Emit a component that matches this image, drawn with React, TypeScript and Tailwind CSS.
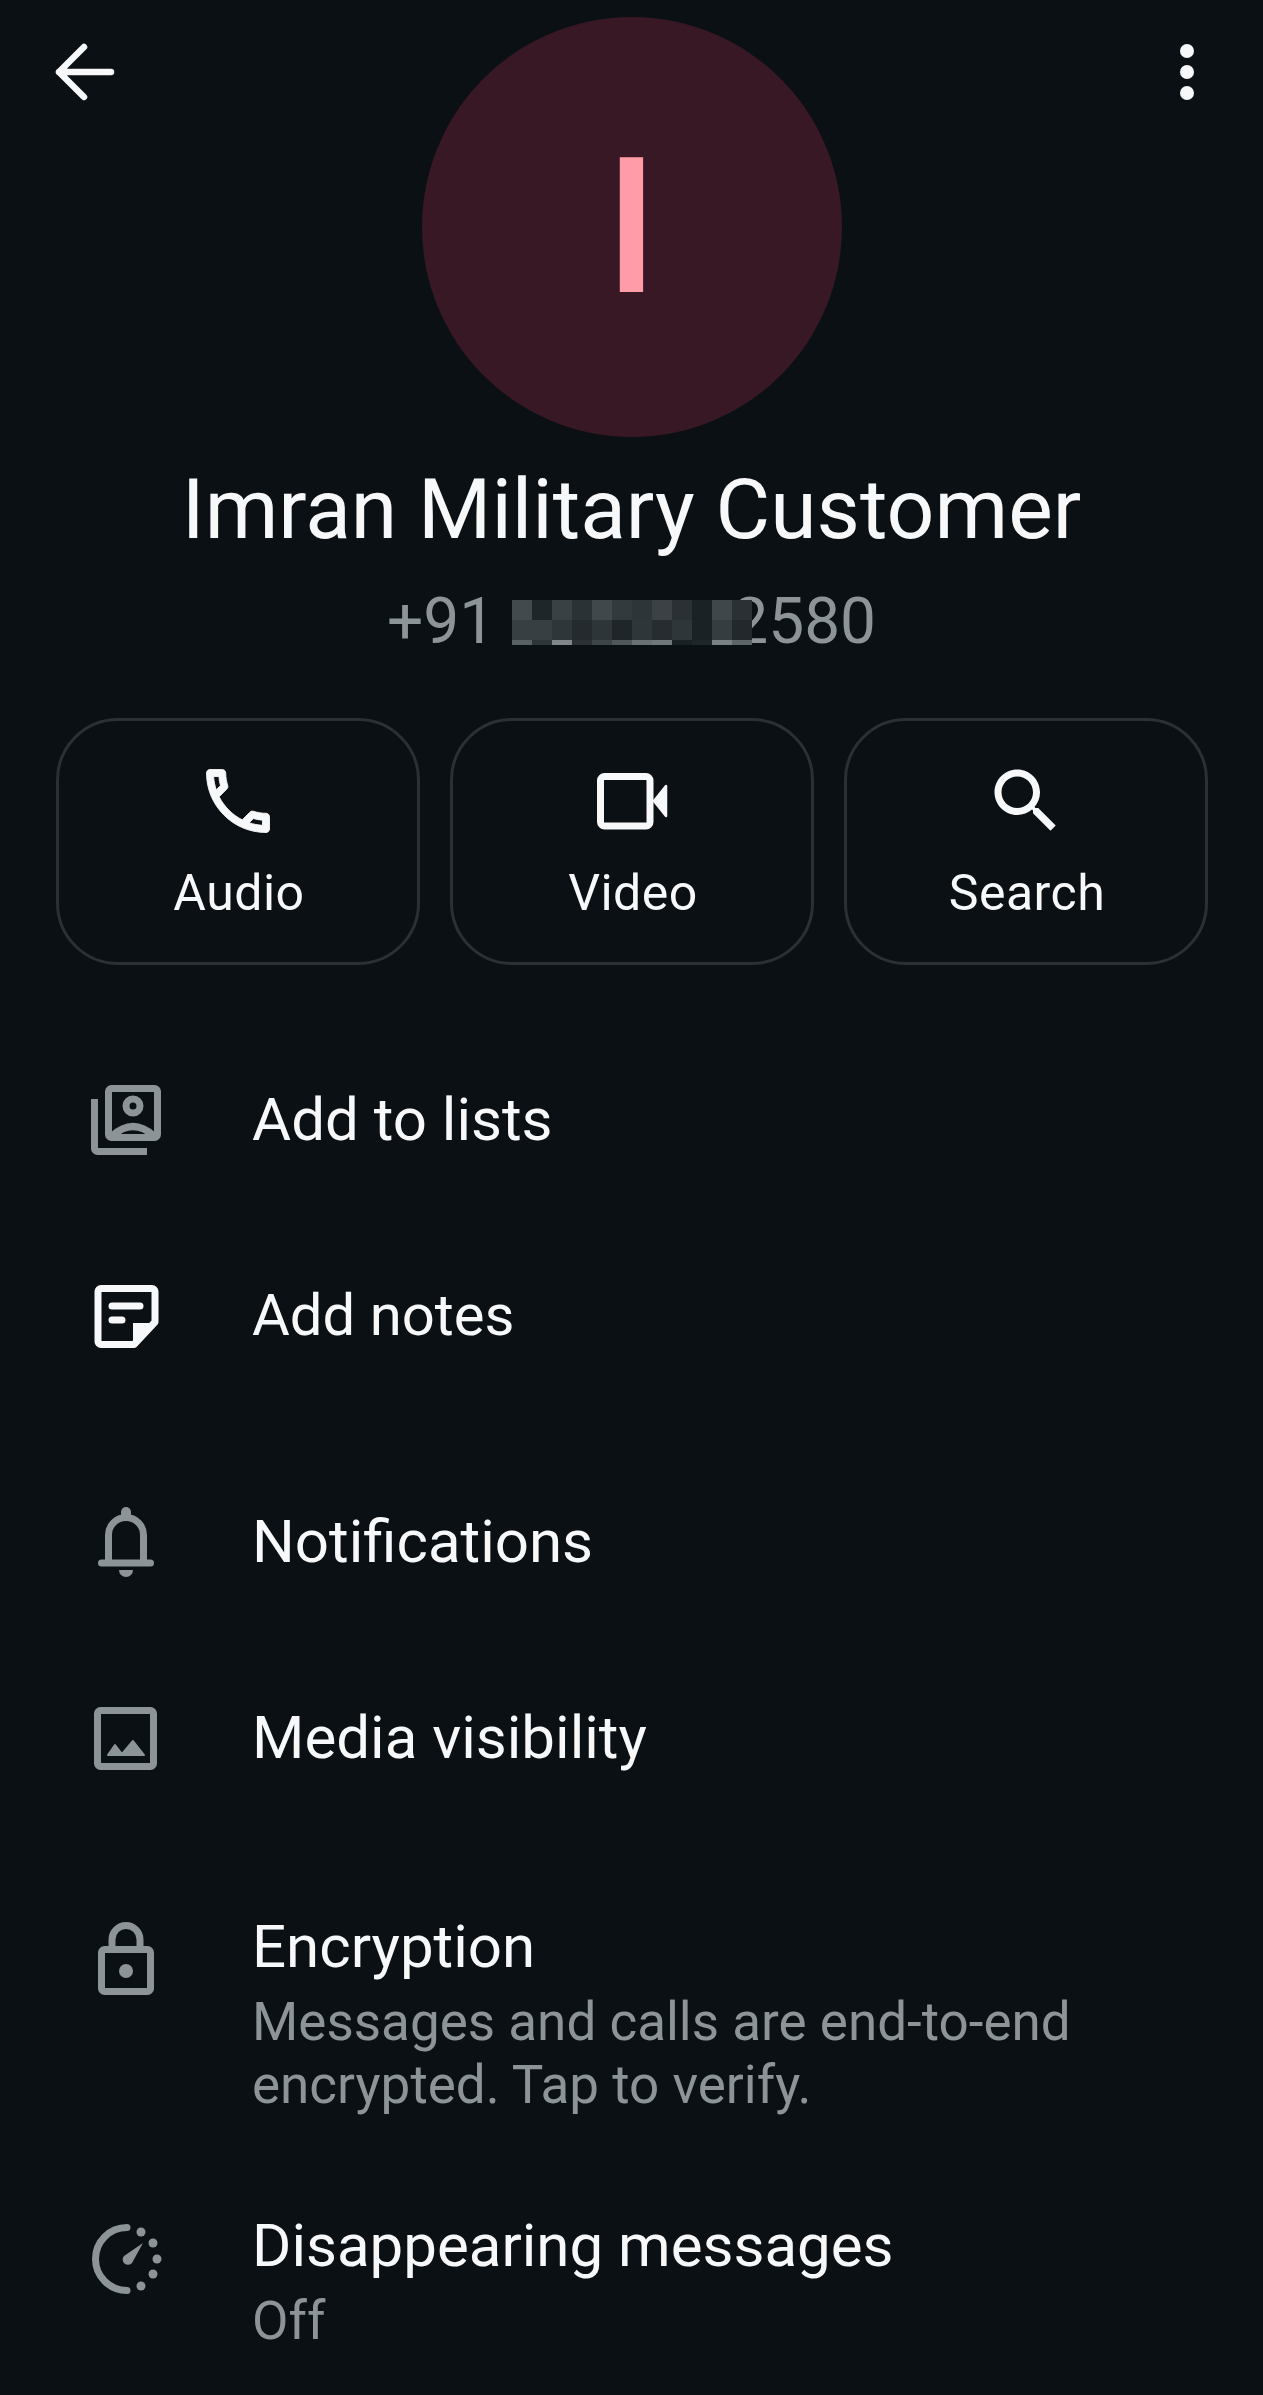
import type { ReactNode } from 'react'

const MOSAIC = [
  'bg-[#434a4d]', 'bg-[#1f2629]', 'bg-[#3a4144]', 'bg-[#2a3235]', 'bg-[#40484c]', 'bg-[#333a3d]', 'bg-[#2e3538]', 'bg-[#3c4145]', 'bg-[#2a3033]', 'bg-[#1b2225]', 'bg-[#40474a]', 'bg-[#2a3033]',
  'bg-[#383f42]', 'bg-[#383f42]', 'bg-[#2f3639]', 'bg-[#242a2d]', 'bg-[#2e3538]', 'bg-[#1f2528]', 'bg-[#2f3639]', 'bg-[#272c30]', 'bg-[#2f3639]', 'bg-[#1b2225]', 'bg-[#363d40]', 'bg-[#22282b]',
  'bg-[#5a6164]', 'bg-[#2e3538]', 'bg-[#80878a]', 'bg-[#2a3033]', 'bg-[#3e4548]', 'bg-[#50575a]', 'bg-[#6a7175]', 'bg-[#70777a]', 'bg-[#1a2124]', 'bg-[#1f2629]', 'bg-[#7a8184]', 'bg-[#5e6569]',
]

function PhoneIcon() {
  return (
    <svg viewBox="0 0 24 24" className="h-[84px] w-[84px] fill-current stroke-current stroke-[0.25]">
      <path d="M6.54 5c.06.89.21 1.76.45 2.59l-1.2 1.2c-.41-1.2-.67-2.47-.76-3.79h1.51m9.86 12.02c.85.24 1.72.39 2.6.45v1.49c-1.32-.09-2.59-.35-3.8-.75l1.2-1.19M7.5 3H4c-.55 0-1 .45-1 1 0 9.39 7.61 17 17 17 .55 0 1-.45 1-1v-3.49c0-.55-.45-1-1-1-1.24 0-2.45-.2-3.57-.57-.1-.04-.21-.05-.31-.05-.26 0-.51.1-.71.29l-2.2 2.2c-2.83-1.45-5.15-3.76-6.59-6.59l2.2-2.2c.28-.28.36-.67.25-1.02C8.7 6.45 8.5 5.25 8.5 4c0-.55-.45-1-1-1z" />
    </svg>
  )
}

function VideoIcon() {
  return (
    <svg viewBox="590 759 84 84" className="h-[84px] w-[84px]" fill="none">
      <rect x="600.5" y="776.5" width="49.5" height="49.5" rx="4" stroke="currentColor" strokeWidth="7" />
      <path d="M654 801 L666 786 V816 Z" fill="currentColor" stroke="currentColor" strokeWidth="2.5" strokeLinejoin="round" />
    </svg>
  )
}

function SearchIcon() {
  return (
    <svg viewBox="0 0 24 24" className="h-[84px] w-[84px] fill-current">
      <path d="M15.5 14h-.79l-.28-.27C15.41 12.59 16 11.11 16 9.5 16 5.91 13.09 3 9.5 3S3 5.91 3 9.5 5.91 16 9.5 16c1.61 0 3.09-.59 4.23-1.57l.27.28v.79l5 4.99L20.49 19l-4.99-5zm-6 0C7.01 14 5 11.99 5 9.5S7.01 5 9.5 5 14 7.01 14 9.5 11.99 14 9.5 14z" />
    </svg>
  )
}

function ActionButton({ icon, label }: { icon: ReactNode; label: string }) {
  return (
    <button
      type="button"
      className="flex h-[247px] w-[364px] flex-col items-center rounded-[62px] border-[3px] border-[#2a3034] pt-[38px] text-[#f7f8fa]"
    >
      {icon}
      <span className="mt-[18px] pl-[3px] text-[50px] leading-[64px] tracking-[0.5px]">{label}</span>
    </button>
  )
}

function RowIcon({ top, children }: { top: number; children: ReactNode }) {
  return (
    <svg viewBox={`81 ${top} 90 90`} className="h-[90px] w-[90px] shrink-0" fill="none">
      {children}
    </svg>
  )
}

function Row({ icon, label, className, textClass = 'text-[60px]' }: { icon: ReactNode; label: string; className: string; textClass?: string }) {
  return (
    <div className={`flex items-center pl-[81px] ${className}`}>
      <div className="w-[171px] shrink-0">{icon}</div>
      <span className={`leading-[70px] text-[#f7f8fa] ${textClass}`}>{label}</span>
    </div>
  )
}

const GRAY = '#8c9498'

export default function App() {
  return (
    <div className="relative h-[2395px] w-[1263px] overflow-hidden bg-[#0b1014] font-['Roboto',sans-serif]">
      {/* top bar floats over the avatar row */}
      <svg viewBox="40 30 90 90" className="absolute top-[30px] left-[40px] h-[90px] w-[90px]" fill="none">
        <path d="M84 47 L59 72 L84 97 M59 72 H111" stroke="#f7f8fa" strokeWidth="6.5" strokeLinecap="round" strokeLinejoin="round" />
      </svg>
      <svg viewBox="1150 30 80 90" className="absolute top-[30px] left-[1150px] h-[90px] w-[80px]" fill="#f7f8fa">
        <circle cx="1187" cy="51" r="7" />
        <circle cx="1187" cy="72" r="7" />
        <circle cx="1187" cy="93" r="7" />
      </svg>

      <header className="flex flex-col items-center pt-[17px]">
        <div className="flex h-[420px] w-[420px] items-center justify-center rounded-full bg-[#371824]">
          <span className="text-[190px] leading-none font-medium text-[#ff9ca8]">I</span>
        </div>
        <h1 className="mt-[26px] text-[84px] leading-[94px] font-normal text-[#f7f8fa]">Imran Military Customer</h1>
        <div className="mt-[30px] flex items-center text-[64px] leading-[70px] text-[#8c9498]">
          <span className="mr-[17px]">+91</span>
          <div className="relative z-10 grid grid-cols-[repeat(12,20px)] grid-rows-[20px_20px_5px]">
            {MOSAIC.map((cell, i) => (
              <span key={i} className={cell} />
            ))}
          </div>
          <span className="-ml-[20px]">2580</span>
        </div>
      </header>

      <div className="mt-[61px] flex justify-center gap-[30px]">
        <ActionButton icon={<PhoneIcon />} label="Audio" />
        <ActionButton icon={<VideoIcon />} label="Video" />
        <ActionButton icon={<SearchIcon />} label="Search" />
      </div>

      <div className="mt-[57px]">
        <Row
          className="h-[196px]"
          label="Add to lists"
          icon={
            <RowIcon top={1074}>
              <g stroke={GRAY} strokeWidth="7">
                <rect x="108.5" y="1087.5" width="49" height="49" rx="3" />
                <circle cx="133" cy="1105" r="7" />
                <path d="M112 1135 Q133 1116 154 1135" />
                <path d="M94.5 1098 V1147.5 a3 3 0 0 0 3 3 H147" />
              </g>
            </RowIcon>
          }
        />
        <Row
          className="h-[196px]"
          label="Add notes"
          textClass="-mt-[3px] text-[58px]"
          icon={
            <RowIcon top={1270}>
              <path d="M101 1287.5 H152 a3 3 0 0 1 3 3 V1321 L134 1343.5 H101 a3 3 0 0 1 -3 -3 V1290.5 a3 3 0 0 1 3 -3 Z" stroke="#f7f8fa" strokeWidth="7" strokeLinejoin="round" />
              <path d="M133 1322 H156 L136 1345 H133 Z" fill="#f7f8fa" />
              <path d="M112 1305 H140 M112 1319 H122" stroke="#f7f8fa" strokeWidth="7" strokeLinecap="round" />
            </RowIcon>
          }
        />
        <Row
          className="mt-[30px] h-[196px]"
          label="Notifications"
          icon={
            <RowIcon top={1495}>
              <path d="M108.5 1561 V1533 a17.5 17.5 0 0 1 35 0 V1561 M101.5 1561 H150.5" stroke={GRAY} strokeWidth="7" strokeLinecap="round" />
              <rect x="121" y="1505" width="10" height="12" rx="5" fill={GRAY} />
              <path d="M119 1568 H133 a7 7 0 0 1 -14 0 Z" fill={GRAY} />
            </RowIcon>
          }
        />
        <Row
          className="h-[196px]"
          label="Media visibility"
          icon={
            <RowIcon top={1690}>
              <rect x="97.5" y="1707.5" width="56" height="56" rx="3" stroke={GRAY} strokeWidth="7" />
              <path d="M108 1752 L115 1742 L122 1751 L133 1738 L144 1752 Z" fill={GRAY} stroke={GRAY} strokeWidth="2" strokeLinejoin="round" />
            </RowIcon>
          }
        />
      </div>

      <div className="mt-[76px] flex pl-[81px]">
        <div className="w-[171px] shrink-0 pt-[1px]">
          <RowIcon top={1913}>
            <rect x="101.5" y="1949.5" width="49" height="42" rx="3" stroke={GRAY} strokeWidth="7" />
            <path d="M112 1946 V1939.5 a14 14 0 0 1 28 0 V1946" stroke={GRAY} strokeWidth="7" />
            <circle cx="126" cy="1971" r="7" fill={GRAY} />
          </RowIcon>
        </div>
        <div className="w-[860px]">
          <div className="text-[60px] leading-[70px] text-[#f7f8fa]">Encryption</div>
          <div className="mt-[9px] text-[53px] leading-[63px] text-[#8c9498]">
            Messages and calls are end-to-end encrypted. Tap to verify.
          </div>
        </div>
      </div>

      <div className="mt-[94px] flex pl-[81px]">
        <div className="w-[171px] shrink-0 pt-[3px]">
          <RowIcon top={2213}>
            <path d="M127 2226.5 A31.5 31.5 0 1 0 127 2289.5" stroke={GRAY} strokeWidth="7" strokeLinecap="round" />
            <g fill={GRAY}>
              <circle cx="141" cy="2231" r="4.5" />
              <circle cx="153" cy="2242" r="4.5" />
              <circle cx="157" cy="2258" r="4.5" />
              <circle cx="153" cy="2273" r="4.5" />
              <circle cx="141" cy="2285" r="4.5" />
              <path d="M143 2242 L132 2262 a5 5 0 0 1 -8 -7 Z" />
            </g>
          </RowIcon>
        </div>
        <div>
          <div className="text-[60px] leading-[70px] text-[#f7f8fa]">Disappearing messages</div>
          <div className="mt-[9px] text-[53px] leading-[63px] text-[#8c9498]">Off</div>
        </div>
      </div>
    </div>
  )
}
